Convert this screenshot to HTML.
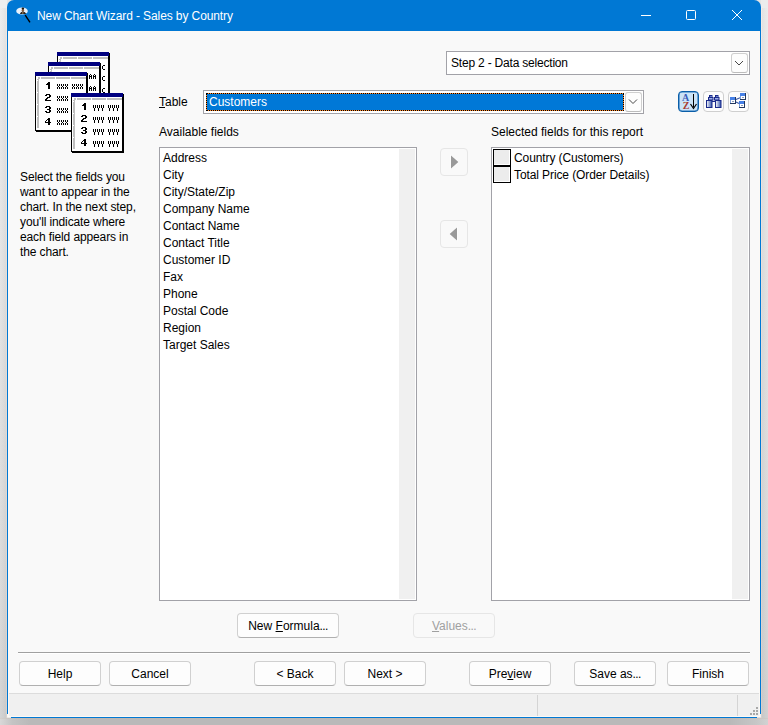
<!DOCTYPE html>
<html><head><meta charset="utf-8">
<style>
*{margin:0;padding:0;box-sizing:border-box}
html,body{width:768px;height:725px;overflow:hidden}
body{position:relative;background:#e4e4e4;font-family:"Liberation Sans",sans-serif;font-size:12px;color:#000}
.a{position:absolute}
.t{white-space:nowrap;line-height:15px}
.box{background:#fff;border:1px solid #a2a2a8}
.sb{background:#f0f0f0}
.btn{border:1px solid #d0d0d0;border-bottom-color:#b0b0b0;border-radius:4px;background:#fdfdfd;text-align:center;line-height:24px;white-space:nowrap}
.dd{background:#fdfdfd;border:1px solid #cfcfcf;border-bottom-color:#bcbcbc;border-radius:3px}
.u{text-decoration:underline;text-underline-offset:1px;text-decoration-thickness:1px}
svg{position:absolute;overflow:visible}
</style></head><body>
<!-- outer background / shadows -->
<div class="a" style="left:0;top:0;width:6px;height:718px;background:linear-gradient(90deg,rgba(255,255,255,0.05),rgba(0,0,0,0.04)),linear-gradient(#eeeeee 0,#e8e8e8 94px,#e3e3e3 300px,#d9d9d9 604px,#d2d2d2 718px)"></div>
<div class="a" style="left:6px;top:6px;width:1px;height:712px;background:linear-gradient(#f0e8e2,#e6ddd6 300px,#ddd5cf 604px,#d8d0ca)"></div>
<div class="a" style="left:762px;top:0;width:6px;height:718px;background:linear-gradient(90deg,rgba(0,0,0,0.04),rgba(255,255,255,0.04)),linear-gradient(#ececec 0,#e8e8e8 94px,#e2e2e2 300px,#d7d7d7 604px,#d0d0d0 718px)"></div>
<div class="a" style="left:761px;top:6px;width:1px;height:712px;background:linear-gradient(#f2ebe6,#e6ded8 300px,#dcd5d0 604px,#d6cec8)"></div>
<div class="a" style="left:0;top:718px;width:768px;height:7px;background:linear-gradient(rgba(200,180,165,0.25) 0,rgba(200,180,165,0.25) 1px,rgba(0,0,0,0) 1px),linear-gradient(90deg,#d8d8d8 0,#c4c4c4 12px,#b9b9b9 30px,#b9b9b9 730px,#c6c6c6 756px,#d2d2d2 768px)"></div>
<div class="a" style="left:0;top:0;width:7px;height:8px;background:#efefef"></div>
<div class="a" style="left:761px;top:0;width:7px;height:8px;background:#ececec"></div>

<!-- window frame -->
<div class="a" style="left:7px;top:0;width:754px;height:718px;background:#0078d4;border-radius:7px 7px 0 0"></div>
<div class="a" style="left:8px;top:31px;width:752px;height:686px;background:#fcf9f5"></div>
<div class="a" style="left:9px;top:32px;width:750px;height:684px;background:#f9f9f9"></div>

<div class="a" style="left:7px;top:714px;width:1px;height:4px;background:#f6f6f6"></div>
<div class="a" style="left:7px;top:717px;width:4px;height:1px;background:#e8e8e8"></div>
<div class="a" style="left:760px;top:714px;width:1px;height:4px;background:#f0f0f0"></div>
<div class="a" style="left:757px;top:717px;width:4px;height:1px;background:#e0e0e0"></div>
<!-- title bar -->
<svg style="left:0;top:0" width="768" height="31">
  <ellipse cx="22" cy="11" rx="5.8" ry="3.6" fill="#eaf2fb"/>
  <ellipse cx="22.9" cy="10.3" rx="1.2" ry="1.6" fill="#8a6040"/>
  <ellipse cx="22.9" cy="8.6" rx="1.3" ry="1" fill="#201408"/>
  <path d="M19.8 14 Q20.5 11.8 22.9 11.6 Q25.5 11.8 26.2 14 Z" fill="#2a2018"/>
  <path d="M22.4 12 L23.4 12 L23.2 14 L22.6 14 Z" fill="#c8a070"/>
  <line x1="25.2" y1="15.2" x2="30" y2="22.3" stroke="#000" stroke-width="1.4"/>
  <line x1="641" y1="15.5" x2="651" y2="15.5" stroke="#fff" stroke-width="1"/>
  <rect x="686.5" y="10.5" width="9" height="9" rx="1" fill="none" stroke="#fff" stroke-width="1"/>
  <path d="M732 10 L742 20 M742 10 L732 20" stroke="#fff" stroke-width="1"/>
</svg>
<div class="a t" style="left:37px;top:9px;color:#fff;letter-spacing:-0.1px">New Chart Wizard - Sales by Country</div>

<!-- picture -->
<svg style="left:0;top:0" width="140" height="160" shape-rendering="crispEdges" id="pic"><rect x="58" y="53" width="52" height="59" fill="#000"/><rect x="57" y="52" width="52" height="59" fill="#000"/><rect x="58" y="56" width="50" height="54" fill="#fff"/><rect x="57" y="52" width="52" height="4" fill="#000080"/><rect x="59" y="57" width="49" height="2" fill="#c0c0c0"/><rect x="59" y="57" width="2" height="51" fill="#c0c0c0"/><path fill="#fff" d="M59 57h1v2h-1zM62 57h1v2h-1zM77 57h1v2h-1zM92 57h1v2h-1zM59 60h1v1h-1zM59 72h1v1h-1zM59 84h1v1h-1zM59 96h1v1h-1zM59 108h1v1h-1z"/><path d="M103 65h2v1h-2zM102 66h1v1h-1zM102 67h1v1h-1zM102 68h1v1h-1zM103 69h2v1h-2z"/><path d="M103 76h2v1h-2zM102 77h1v1h-1zM102 78h1v1h-1zM102 79h1v1h-1zM103 80h2v1h-2z"/><path d="M103 88h2v1h-2zM102 89h1v1h-1zM102 90h1v1h-1zM102 91h1v1h-1zM103 92h2v1h-2z"/><rect x="49" y="63" width="52" height="59" fill="#000"/><rect x="48" y="62" width="52" height="59" fill="#000"/><rect x="49" y="66" width="50" height="54" fill="#fff"/><rect x="48" y="62" width="52" height="4" fill="#000080"/><rect x="50" y="67" width="49" height="2" fill="#c0c0c0"/><rect x="50" y="67" width="2" height="51" fill="#c0c0c0"/><path fill="#fff" d="M50 67h1v2h-1zM53 67h1v2h-1zM68 67h1v2h-1zM83 67h1v2h-1zM50 70h1v1h-1zM50 82h1v1h-1zM50 94h1v1h-1zM50 106h1v1h-1zM50 118h1v1h-1z"/><path d="M86 74h1v1h-1zM85 75h1v1h-1zM87 75h1v1h-1zM85 76h3v1h-3zM85 77h1v1h-1zM87 77h1v1h-1zM85 78h1v1h-1zM87 78h1v1h-1zM90 74h1v1h-1zM89 75h1v1h-1zM91 75h1v1h-1zM89 76h3v1h-3zM89 77h1v1h-1zM91 77h1v1h-1zM89 78h1v1h-1zM91 78h1v1h-1zM94 74h1v1h-1zM93 75h1v1h-1zM95 75h1v1h-1zM93 76h3v1h-3zM93 77h1v1h-1zM95 77h1v1h-1zM93 78h1v1h-1zM95 78h1v1h-1z"/><path d="M86 86h1v1h-1zM85 87h1v1h-1zM87 87h1v1h-1zM85 88h3v1h-3zM85 89h1v1h-1zM87 89h1v1h-1zM85 90h1v1h-1zM87 90h1v1h-1zM90 86h1v1h-1zM89 87h1v1h-1zM91 87h1v1h-1zM89 88h3v1h-3zM89 89h1v1h-1zM91 89h1v1h-1zM89 90h1v1h-1zM91 90h1v1h-1zM94 86h1v1h-1zM93 87h1v1h-1zM95 87h1v1h-1zM93 88h3v1h-3zM93 89h1v1h-1zM95 89h1v1h-1zM93 90h1v1h-1zM95 90h1v1h-1z"/><rect x="36" y="73" width="52" height="59" fill="#000"/><rect x="35" y="72" width="52" height="59" fill="#000"/><rect x="36" y="76" width="50" height="54" fill="#fff"/><rect x="35" y="72" width="52" height="4" fill="#000080"/><rect x="37" y="77" width="49" height="2" fill="#c0c0c0"/><rect x="37" y="77" width="2" height="51" fill="#c0c0c0"/><path fill="#fff" d="M37 77h1v2h-1zM40 77h1v2h-1zM55 77h1v2h-1zM70 77h1v2h-1zM37 80h1v1h-1zM37 92h1v1h-1zM37 104h1v1h-1zM37 116h1v1h-1zM37 128h1v1h-1z"/><path d="M48 82h2v1h-2zM47 83h3v1h-3zM46 84h4v1h-4zM48 85h2v1h-2zM48 86h2v1h-2zM48 87h2v1h-2zM48 88h2v1h-2z"/><path d="M57 84h1v1h-1zM59 84h1v1h-1zM57 85h1v1h-1zM59 85h1v1h-1zM58 86h1v1h-1zM57 87h1v1h-1zM59 87h1v1h-1zM57 88h1v1h-1zM59 88h1v1h-1zM61 84h1v1h-1zM63 84h1v1h-1zM61 85h1v1h-1zM63 85h1v1h-1zM62 86h1v1h-1zM61 87h1v1h-1zM63 87h1v1h-1zM61 88h1v1h-1zM63 88h1v1h-1zM65 84h1v1h-1zM67 84h1v1h-1zM65 85h1v1h-1zM67 85h1v1h-1zM66 86h1v1h-1zM65 87h1v1h-1zM67 87h1v1h-1zM65 88h1v1h-1zM67 88h1v1h-1z"/><path d="M72 84h1v1h-1zM74 84h1v1h-1zM72 85h1v1h-1zM74 85h1v1h-1zM73 86h1v1h-1zM72 87h1v1h-1zM74 87h1v1h-1zM72 88h1v1h-1zM74 88h1v1h-1zM76 84h1v1h-1zM78 84h1v1h-1zM76 85h1v1h-1zM78 85h1v1h-1zM77 86h1v1h-1zM76 87h1v1h-1zM78 87h1v1h-1zM76 88h1v1h-1zM78 88h1v1h-1zM80 84h1v1h-1zM82 84h1v1h-1zM80 85h1v1h-1zM82 85h1v1h-1zM81 86h1v1h-1zM80 87h1v1h-1zM82 87h1v1h-1zM80 88h1v1h-1zM82 88h1v1h-1z"/><path d="M46 94h4v1h-4zM45 95h2v1h-2zM49 95h2v1h-2zM49 96h2v1h-2zM47 97h3v1h-3zM46 98h2v1h-2zM45 99h2v1h-2zM45 100h6v1h-6z"/><path d="M57 96h1v1h-1zM59 96h1v1h-1zM57 97h1v1h-1zM59 97h1v1h-1zM58 98h1v1h-1zM57 99h1v1h-1zM59 99h1v1h-1zM57 100h1v1h-1zM59 100h1v1h-1zM61 96h1v1h-1zM63 96h1v1h-1zM61 97h1v1h-1zM63 97h1v1h-1zM62 98h1v1h-1zM61 99h1v1h-1zM63 99h1v1h-1zM61 100h1v1h-1zM63 100h1v1h-1zM65 96h1v1h-1zM67 96h1v1h-1zM65 97h1v1h-1zM67 97h1v1h-1zM66 98h1v1h-1zM65 99h1v1h-1zM67 99h1v1h-1zM65 100h1v1h-1zM67 100h1v1h-1z"/><path d="M72 96h1v1h-1zM74 96h1v1h-1zM72 97h1v1h-1zM74 97h1v1h-1zM73 98h1v1h-1zM72 99h1v1h-1zM74 99h1v1h-1zM72 100h1v1h-1zM74 100h1v1h-1zM76 96h1v1h-1zM78 96h1v1h-1zM76 97h1v1h-1zM78 97h1v1h-1zM77 98h1v1h-1zM76 99h1v1h-1zM78 99h1v1h-1zM76 100h1v1h-1zM78 100h1v1h-1zM80 96h1v1h-1zM82 96h1v1h-1zM80 97h1v1h-1zM82 97h1v1h-1zM81 98h1v1h-1zM80 99h1v1h-1zM82 99h1v1h-1zM80 100h1v1h-1zM82 100h1v1h-1z"/><path d="M46 106h4v1h-4zM45 107h2v1h-2zM49 107h2v1h-2zM49 108h2v1h-2zM47 109h3v1h-3zM49 110h2v1h-2zM45 111h2v1h-2zM49 111h2v1h-2zM46 112h4v1h-4z"/><path d="M57 108h1v1h-1zM59 108h1v1h-1zM57 109h1v1h-1zM59 109h1v1h-1zM58 110h1v1h-1zM57 111h1v1h-1zM59 111h1v1h-1zM57 112h1v1h-1zM59 112h1v1h-1zM61 108h1v1h-1zM63 108h1v1h-1zM61 109h1v1h-1zM63 109h1v1h-1zM62 110h1v1h-1zM61 111h1v1h-1zM63 111h1v1h-1zM61 112h1v1h-1zM63 112h1v1h-1zM65 108h1v1h-1zM67 108h1v1h-1zM65 109h1v1h-1zM67 109h1v1h-1zM66 110h1v1h-1zM65 111h1v1h-1zM67 111h1v1h-1zM65 112h1v1h-1zM67 112h1v1h-1z"/><path d="M72 108h1v1h-1zM74 108h1v1h-1zM72 109h1v1h-1zM74 109h1v1h-1zM73 110h1v1h-1zM72 111h1v1h-1zM74 111h1v1h-1zM72 112h1v1h-1zM74 112h1v1h-1zM76 108h1v1h-1zM78 108h1v1h-1zM76 109h1v1h-1zM78 109h1v1h-1zM77 110h1v1h-1zM76 111h1v1h-1zM78 111h1v1h-1zM76 112h1v1h-1zM78 112h1v1h-1zM80 108h1v1h-1zM82 108h1v1h-1zM80 109h1v1h-1zM82 109h1v1h-1zM81 110h1v1h-1zM80 111h1v1h-1zM82 111h1v1h-1zM80 112h1v1h-1zM82 112h1v1h-1z"/><path d="M48 118h2v1h-2zM47 119h3v1h-3zM46 120h1v1h-1zM48 120h2v1h-2zM45 121h1v1h-1zM48 121h2v1h-2zM45 122h6v1h-6zM48 123h2v1h-2zM48 124h2v1h-2z"/><path d="M57 120h1v1h-1zM59 120h1v1h-1zM57 121h1v1h-1zM59 121h1v1h-1zM58 122h1v1h-1zM57 123h1v1h-1zM59 123h1v1h-1zM57 124h1v1h-1zM59 124h1v1h-1zM61 120h1v1h-1zM63 120h1v1h-1zM61 121h1v1h-1zM63 121h1v1h-1zM62 122h1v1h-1zM61 123h1v1h-1zM63 123h1v1h-1zM61 124h1v1h-1zM63 124h1v1h-1zM65 120h1v1h-1zM67 120h1v1h-1zM65 121h1v1h-1zM67 121h1v1h-1zM66 122h1v1h-1zM65 123h1v1h-1zM67 123h1v1h-1zM65 124h1v1h-1zM67 124h1v1h-1z"/><path d="M72 120h1v1h-1zM74 120h1v1h-1zM72 121h1v1h-1zM74 121h1v1h-1zM73 122h1v1h-1zM72 123h1v1h-1zM74 123h1v1h-1zM72 124h1v1h-1zM74 124h1v1h-1zM76 120h1v1h-1zM78 120h1v1h-1zM76 121h1v1h-1zM78 121h1v1h-1zM77 122h1v1h-1zM76 123h1v1h-1zM78 123h1v1h-1zM76 124h1v1h-1zM78 124h1v1h-1zM80 120h1v1h-1zM82 120h1v1h-1zM80 121h1v1h-1zM82 121h1v1h-1zM81 122h1v1h-1zM80 123h1v1h-1zM82 123h1v1h-1zM80 124h1v1h-1zM82 124h1v1h-1z"/><rect x="72" y="94" width="52" height="59" fill="#000"/><rect x="71" y="93" width="52" height="59" fill="#000"/><rect x="72" y="97" width="50" height="54" fill="#fff"/><rect x="71" y="93" width="52" height="4" fill="#000080"/><rect x="73" y="98" width="49" height="2" fill="#c0c0c0"/><rect x="73" y="98" width="2" height="51" fill="#c0c0c0"/><path fill="#fff" d="M73 98h1v2h-1zM76 98h1v2h-1zM91 98h1v2h-1zM106 98h1v2h-1zM73 101h1v1h-1zM73 113h1v1h-1zM73 125h1v1h-1zM73 137h1v1h-1zM73 149h1v1h-1z"/><path d="M84 103h2v1h-2zM83 104h3v1h-3zM82 105h4v1h-4zM84 106h2v1h-2zM84 107h2v1h-2zM84 108h2v1h-2zM84 109h2v1h-2z"/><path d="M93 105h1v1h-1zM95 105h1v1h-1zM93 106h1v1h-1zM95 106h1v1h-1zM93 107h1v1h-1zM95 107h1v1h-1zM94 108h1v1h-1zM94 109h1v1h-1zM94 110h1v1h-1zM97 105h1v1h-1zM99 105h1v1h-1zM97 106h1v1h-1zM99 106h1v1h-1zM97 107h1v1h-1zM99 107h1v1h-1zM98 108h1v1h-1zM98 109h1v1h-1zM98 110h1v1h-1zM101 105h1v1h-1zM103 105h1v1h-1zM101 106h1v1h-1zM103 106h1v1h-1zM101 107h1v1h-1zM103 107h1v1h-1zM102 108h1v1h-1zM102 109h1v1h-1zM102 110h1v1h-1z"/><path d="M108 105h1v1h-1zM110 105h1v1h-1zM108 106h1v1h-1zM110 106h1v1h-1zM108 107h1v1h-1zM110 107h1v1h-1zM109 108h1v1h-1zM109 109h1v1h-1zM109 110h1v1h-1zM112 105h1v1h-1zM114 105h1v1h-1zM112 106h1v1h-1zM114 106h1v1h-1zM112 107h1v1h-1zM114 107h1v1h-1zM113 108h1v1h-1zM113 109h1v1h-1zM113 110h1v1h-1zM116 105h1v1h-1zM118 105h1v1h-1zM116 106h1v1h-1zM118 106h1v1h-1zM116 107h1v1h-1zM118 107h1v1h-1zM117 108h1v1h-1zM117 109h1v1h-1zM117 110h1v1h-1z"/><path d="M82 115h4v1h-4zM81 116h2v1h-2zM85 116h2v1h-2zM85 117h2v1h-2zM83 118h3v1h-3zM82 119h2v1h-2zM81 120h2v1h-2zM81 121h6v1h-6z"/><path d="M93 117h1v1h-1zM95 117h1v1h-1zM93 118h1v1h-1zM95 118h1v1h-1zM93 119h1v1h-1zM95 119h1v1h-1zM94 120h1v1h-1zM94 121h1v1h-1zM94 122h1v1h-1zM97 117h1v1h-1zM99 117h1v1h-1zM97 118h1v1h-1zM99 118h1v1h-1zM97 119h1v1h-1zM99 119h1v1h-1zM98 120h1v1h-1zM98 121h1v1h-1zM98 122h1v1h-1zM101 117h1v1h-1zM103 117h1v1h-1zM101 118h1v1h-1zM103 118h1v1h-1zM101 119h1v1h-1zM103 119h1v1h-1zM102 120h1v1h-1zM102 121h1v1h-1zM102 122h1v1h-1z"/><path d="M108 117h1v1h-1zM110 117h1v1h-1zM108 118h1v1h-1zM110 118h1v1h-1zM108 119h1v1h-1zM110 119h1v1h-1zM109 120h1v1h-1zM109 121h1v1h-1zM109 122h1v1h-1zM112 117h1v1h-1zM114 117h1v1h-1zM112 118h1v1h-1zM114 118h1v1h-1zM112 119h1v1h-1zM114 119h1v1h-1zM113 120h1v1h-1zM113 121h1v1h-1zM113 122h1v1h-1zM116 117h1v1h-1zM118 117h1v1h-1zM116 118h1v1h-1zM118 118h1v1h-1zM116 119h1v1h-1zM118 119h1v1h-1zM117 120h1v1h-1zM117 121h1v1h-1zM117 122h1v1h-1z"/><path d="M82 127h4v1h-4zM81 128h2v1h-2zM85 128h2v1h-2zM85 129h2v1h-2zM83 130h3v1h-3zM85 131h2v1h-2zM81 132h2v1h-2zM85 132h2v1h-2zM82 133h4v1h-4z"/><path d="M93 129h1v1h-1zM95 129h1v1h-1zM93 130h1v1h-1zM95 130h1v1h-1zM93 131h1v1h-1zM95 131h1v1h-1zM94 132h1v1h-1zM94 133h1v1h-1zM94 134h1v1h-1zM97 129h1v1h-1zM99 129h1v1h-1zM97 130h1v1h-1zM99 130h1v1h-1zM97 131h1v1h-1zM99 131h1v1h-1zM98 132h1v1h-1zM98 133h1v1h-1zM98 134h1v1h-1zM101 129h1v1h-1zM103 129h1v1h-1zM101 130h1v1h-1zM103 130h1v1h-1zM101 131h1v1h-1zM103 131h1v1h-1zM102 132h1v1h-1zM102 133h1v1h-1zM102 134h1v1h-1z"/><path d="M108 129h1v1h-1zM110 129h1v1h-1zM108 130h1v1h-1zM110 130h1v1h-1zM108 131h1v1h-1zM110 131h1v1h-1zM109 132h1v1h-1zM109 133h1v1h-1zM109 134h1v1h-1zM112 129h1v1h-1zM114 129h1v1h-1zM112 130h1v1h-1zM114 130h1v1h-1zM112 131h1v1h-1zM114 131h1v1h-1zM113 132h1v1h-1zM113 133h1v1h-1zM113 134h1v1h-1zM116 129h1v1h-1zM118 129h1v1h-1zM116 130h1v1h-1zM118 130h1v1h-1zM116 131h1v1h-1zM118 131h1v1h-1zM117 132h1v1h-1zM117 133h1v1h-1zM117 134h1v1h-1z"/><path d="M84 139h2v1h-2zM83 140h3v1h-3zM82 141h1v1h-1zM84 141h2v1h-2zM81 142h1v1h-1zM84 142h2v1h-2zM81 143h6v1h-6zM84 144h2v1h-2zM84 145h2v1h-2z"/><path d="M93 141h1v1h-1zM95 141h1v1h-1zM93 142h1v1h-1zM95 142h1v1h-1zM93 143h1v1h-1zM95 143h1v1h-1zM94 144h1v1h-1zM94 145h1v1h-1zM94 146h1v1h-1zM97 141h1v1h-1zM99 141h1v1h-1zM97 142h1v1h-1zM99 142h1v1h-1zM97 143h1v1h-1zM99 143h1v1h-1zM98 144h1v1h-1zM98 145h1v1h-1zM98 146h1v1h-1zM101 141h1v1h-1zM103 141h1v1h-1zM101 142h1v1h-1zM103 142h1v1h-1zM101 143h1v1h-1zM103 143h1v1h-1zM102 144h1v1h-1zM102 145h1v1h-1zM102 146h1v1h-1z"/><path d="M108 141h1v1h-1zM110 141h1v1h-1zM108 142h1v1h-1zM110 142h1v1h-1zM108 143h1v1h-1zM110 143h1v1h-1zM109 144h1v1h-1zM109 145h1v1h-1zM109 146h1v1h-1zM112 141h1v1h-1zM114 141h1v1h-1zM112 142h1v1h-1zM114 142h1v1h-1zM112 143h1v1h-1zM114 143h1v1h-1zM113 144h1v1h-1zM113 145h1v1h-1zM113 146h1v1h-1zM116 141h1v1h-1zM118 141h1v1h-1zM116 142h1v1h-1zM118 142h1v1h-1zM116 143h1v1h-1zM118 143h1v1h-1zM117 144h1v1h-1zM117 145h1v1h-1zM117 146h1v1h-1z"/>
</svg>

<!-- description -->
<div class="a t" style="left:20px;top:170px;letter-spacing:-0.12px">Select the fields you<br>want to appear in the<br>chart. In the next step,<br>you'll indicate where<br>each field appears in<br>the chart.</div>

<!-- step combo -->
<div class="a box" style="left:446px;top:51px;width:304px;height:24px"></div>
<div class="a t" style="left:451px;top:56px;letter-spacing:-0.2px">Step 2 - Data selection</div>
<div class="a dd" style="left:731px;top:53px;width:17px;height:20px"></div>

<!-- table label and combo -->
<div class="a t" style="left:159px;top:95px"><span class="u">T</span>able</div>
<div class="a box" style="left:203px;top:90px;width:441px;height:24px"></div>
<div class="a" style="left:206px;top:93px;width:418px;height:18px;background:#ff8728;border:1px dotted #000"></div>
<div class="a" style="left:207px;top:94px;width:416px;height:16px;background:#0078d7"></div>
<div class="a t" style="left:209px;top:95px;color:#fff">Customers</div>
<div class="a dd" style="left:625px;top:92px;width:17px;height:20px"></div>
<svg style="left:0;top:0" width="768" height="120">
  <path d="M735 61 L739 65 L743 61" fill="none" stroke="#484848" stroke-width="1"/>
  <path d="M629 99.5 L633 103.5 L637 99.5" fill="none" stroke="#484848" stroke-width="1"/>
</svg>

<!-- toolbar -->
<div class="a" style="left:678px;top:91px;width:21px;height:21px;border:1px solid #0a5ea8;border-radius:4px;background:#cce4f7;box-shadow:inset 0 0 0 0.6px #2a78c0"></div>
<div class="a" style="left:703px;top:91px;width:21px;height:21px;border:1px solid #cfcfcf;border-radius:4px;background:#fdfdfd"></div>
<div class="a" style="left:728px;top:91px;width:21px;height:21px;border:1px solid #cfcfcf;border-radius:4px;background:#fdfdfd"></div>
<svg style="left:0;top:0" width="768" height="120" id="tb">
  <text x="685.5" y="100.8" font-family="Liberation Serif" font-weight="bold" font-size="10" fill="#3a5cb8" text-anchor="middle">A</text>
  <text x="686" y="108.8" font-family="Liberation Serif" font-weight="bold" font-size="10" fill="#a83a30" text-anchor="middle">Z</text>
  <line x1="693.5" y1="94" x2="693.5" y2="107" stroke="#000" stroke-width="1"/>
  <path d="M690.5 104 L693.5 108.5 L696.5 104" fill="none" stroke="#000" stroke-width="1.2"/>
  <defs><linearGradient id="bg1" x1="0" x2="1"><stop offset="0" stop-color="#fff"/><stop offset="1" stop-color="#3050a8"/></linearGradient></defs>
  <g stroke="#1a2a8a" stroke-width="1">
    <rect x="709.5" y="95.5" width="2.5" height="2" fill="#6a80d0"/>
    <rect x="708.5" y="97.5" width="4.5" height="2.5" fill="#9fb0e8"/>
    <rect x="706.5" y="100.5" width="5.5" height="7" fill="url(#bg1)"/>
    <rect x="715.5" y="95.5" width="2.5" height="2" fill="#6a80d0"/>
    <rect x="714.5" y="97.5" width="4.5" height="2.5" fill="#9fb0e8"/>
    <rect x="715.5" y="100.5" width="5.5" height="7" fill="url(#bg1)"/>
    <line x1="712" y1="101.5" x2="715" y2="101.5"/>
  </g>
  <g shape-rendering="crispEdges"><rect x="730" y="97" width="6" height="7" fill="#22375e"/><rect x="730" y="97" width="5" height="6" fill="#7b9fdc"/><rect x="730" y="97" width="5" height="2.5" fill="#4680e6"/><rect x="731" y="100" width="4" height="3" fill="#fff"/><rect x="732" y="101" width="2" height="1" fill="#8a9ab8"/><rect x="740" y="93" width="6" height="7" fill="#22375e"/><rect x="740" y="93" width="5" height="6" fill="#7b9fdc"/><rect x="740" y="93" width="5" height="2.5" fill="#4680e6"/><rect x="741" y="96" width="4" height="3" fill="#fff"/><rect x="742" y="97" width="2" height="1" fill="#8a9ab8"/><rect x="739" y="101" width="6" height="7" fill="#22375e"/><rect x="739" y="101" width="5" height="6" fill="#7b9fdc"/><rect x="739" y="101" width="5" height="2.5" fill="#4680e6"/><rect x="740" y="104" width="4" height="3" fill="#fff"/><rect x="741" y="105" width="2" height="1" fill="#8a9ab8"/></g><path d="M736 99.5 L740 97.8 M736 102 L739 103.6" stroke="#3a5aa8" stroke-width="1.1"/>
</svg>

<div class="a t" style="left:159px;top:125px">Available fields</div>
<div class="a t" style="left:491px;top:125px">Selected fields for this report</div>

<!-- left list -->
<div class="a box" style="left:159px;top:147px;width:258px;height:454px"></div>
<div class="a sb" style="left:399px;top:149px;width:16px;height:450px"></div>
<div class="a t" style="left:163px;top:150px;line-height:17px">Address<br>City<br>City/State/Zip<br>Company Name<br>Contact Name<br>Contact Title<br>Customer ID<br>Fax<br>Phone<br>Postal Code<br>Region<br>Target Sales</div>

<!-- arrows -->
<div class="a" style="left:440px;top:148px;width:28px;height:28px;border:1px solid #e6e6e6;border-radius:4px"></div>
<div class="a" style="left:440px;top:220px;width:28px;height:28px;border:1px solid #e6e6e6;border-radius:4px"></div>
<svg style="left:0;top:0" width="768" height="260">
  <path d="M450.5 154.5 L450.5 169.5 L459.2 162 Z M457.5 226.5 L457.5 241.5 L448.8 234 Z" fill="#fff"/>
  <path d="M451 155.5 L451 168.5 L458.4 162 Z" fill="#999"/>
  <path d="M457 227.5 L457 240.5 L449.6 234 Z" fill="#999"/>
</svg>

<!-- right list -->
<div class="a box" style="left:491px;top:147px;width:259px;height:454px"></div>
<div class="a sb" style="left:732px;top:149px;width:16px;height:450px"></div>
<div class="a" style="left:493px;top:149px;width:18px;height:17px;border:1px solid #000;background:#ececec;box-shadow:inset -1px -1px #fff"></div>
<div class="a" style="left:493px;top:166px;width:18px;height:17px;border:1px solid #000;background:#ececec;box-shadow:inset -1px -1px #fff"></div>
<div class="a t" style="left:514px;top:150px;line-height:17px;letter-spacing:-0.1px">Country (Customers)<br>Total Price (Order Details)</div>

<!-- formula buttons -->
<div class="a btn" style="left:237px;top:613px;width:102px;height:25px">New <span class="u">F</span>ormula<span style="letter-spacing:-0.6px">...</span></div>
<div class="a btn" style="left:413px;top:613px;width:82px;height:25px;color:#a0a0a0;border-color:#e6e6e6;background:#f9f9f9"><span class="u">V</span>alues<span style="letter-spacing:-0.6px">...</span></div>

<!-- separator -->
<div class="a" style="left:18px;top:652px;width:732px;height:1px;background:#a0a0a0"></div>
<div class="a" style="left:18px;top:653px;width:732px;height:1px;background:#fff"></div>

<!-- bottom buttons -->
<div class="a btn" style="left:19px;top:661px;width:82px;height:25px">Help</div>
<div class="a btn" style="left:109px;top:661px;width:82px;height:25px">Cancel</div>
<div class="a btn" style="left:254px;top:661px;width:82px;height:25px">&lt; Back</div>
<div class="a btn" style="left:344px;top:661px;width:82px;height:25px">Next &gt;</div>
<div class="a btn" style="left:469px;top:661px;width:82px;height:25px">Pre<span class="u">v</span>iew</div>
<div class="a btn" style="left:574px;top:661px;width:82px;height:25px">Save as<span style="letter-spacing:-0.6px">...</span></div>
<div class="a btn" style="left:667px;top:661px;width:82px;height:25px">Finish</div>

<!-- status bar -->
<div class="a" style="left:9px;top:693px;width:750px;height:1px;background:#dcdcdc"></div>
<div class="a" style="left:9px;top:694px;width:750px;height:22px;background:#f0f0f0"></div>
<div class="a" style="left:537px;top:695px;width:1px;height:21px;background:#d4d4d4"></div>
<div class="a" style="left:737px;top:695px;width:1px;height:21px;background:#d4d4d4"></div>
<svg style="left:0;top:0" width="768" height="725" shape-rendering="crispEdges">
  <g fill="#a8a8a8">
  <rect x="756" y="707" width="2" height="2"/>
  <rect x="753" y="710" width="2" height="2"/><rect x="756" y="710" width="2" height="2"/>
  <rect x="750" y="713" width="2" height="2"/><rect x="753" y="713" width="2" height="2"/><rect x="756" y="713" width="2" height="2"/>
  </g>
</svg>
</body></html>
